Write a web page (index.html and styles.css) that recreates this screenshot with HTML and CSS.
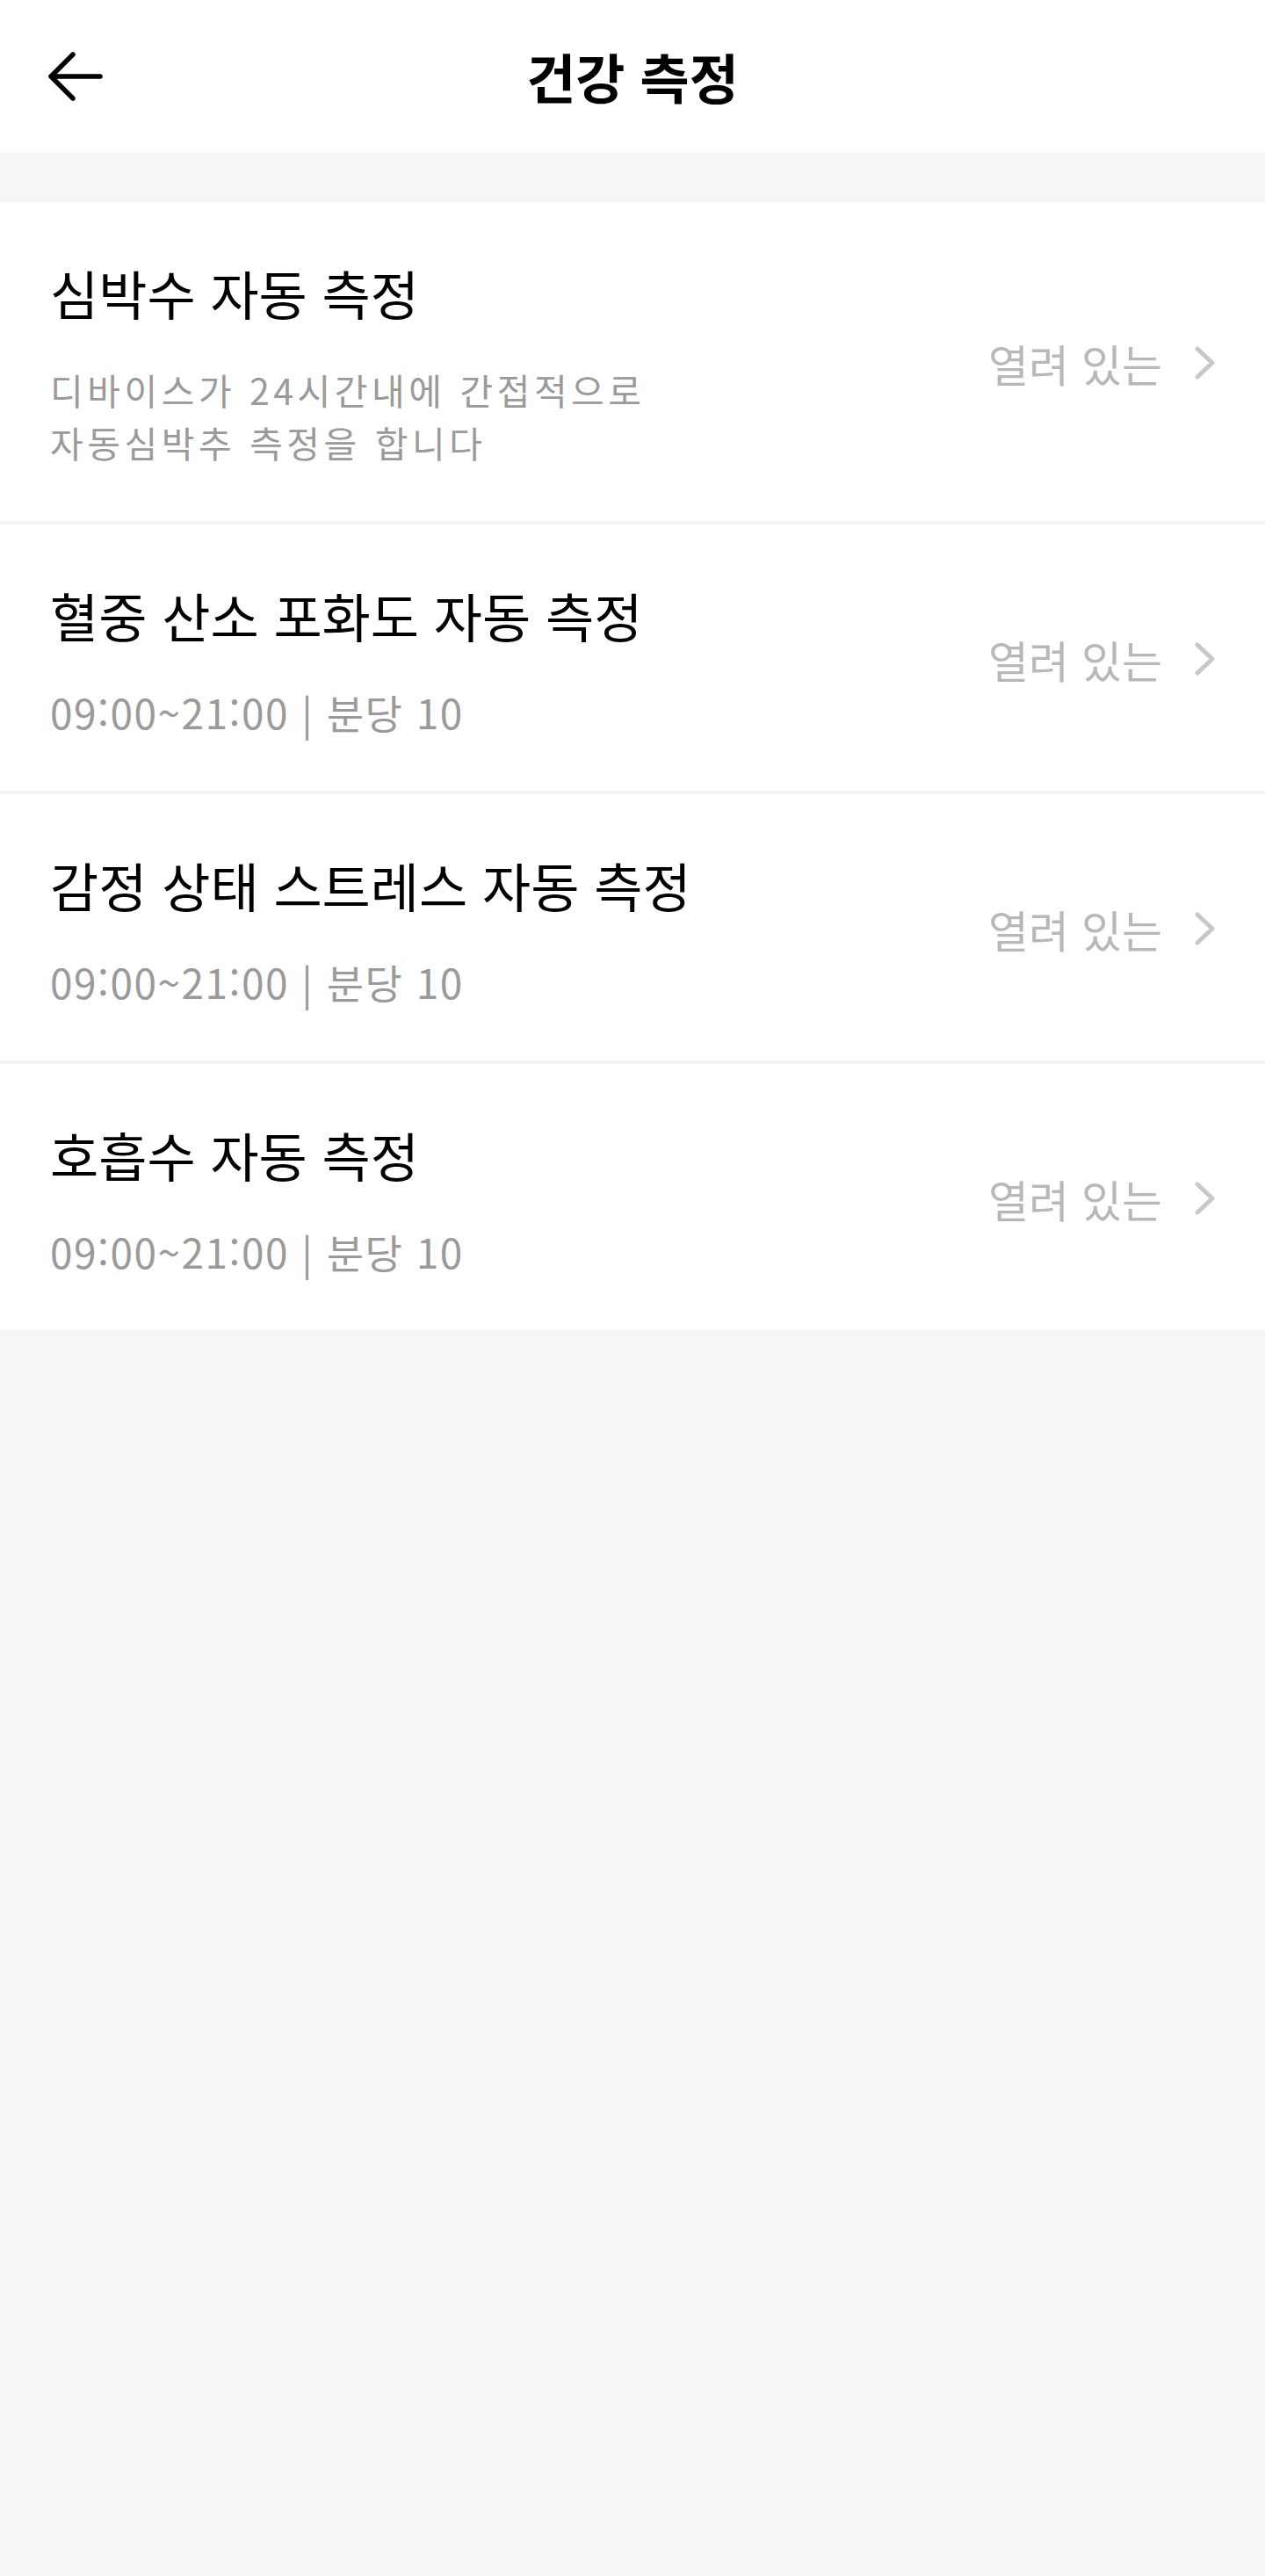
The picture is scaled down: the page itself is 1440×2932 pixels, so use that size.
FILE: index.html
```html
<!DOCTYPE html>
<html lang="ko">
<head>
    <meta charset="UTF-8">
    <meta name="viewport" content="width=device-width, initial-scale=1.0">
    <title>건강 측정</title>
    <link rel="stylesheet" href="styles.css">
</head>
<body>
    <header class="topbar">
        <button class="back-btn" aria-label="뒤로">
            <svg width="64" height="56" viewBox="0 0 64 56">
                <path d="M60 28 H4 M29 3 L4 28 L29 53" fill="none" stroke="#000" stroke-width="5.5" stroke-linecap="round" stroke-linejoin="round"/>
            </svg>
        </button>
        <h1 class="topbar-title">건강 측정</h1>
        <span></span>
    </header>

    <div class="gap"></div>

    <ul class="list">
        <li class="item">
            <div class="item-text">
                <div class="item-title">심박수 자동 측정</div>
                <div class="item-sub item-desc">디바이스가 24시간내에 간접적으로<br>자동심박추 측정을 합니다</div>
            </div>
            <div class="item-state">
                <span>열려 있는</span>
                <svg class="chevron" width="26" height="40" viewBox="0 0 26 40">
                    <path d="M4 4 L21 20 L4 36" fill="none" stroke="#c8c8c8" stroke-width="5" stroke-linecap="round" stroke-linejoin="round"/>
                </svg>
            </div>
        </li>
        <li class="item">
            <div class="item-text">
                <div class="item-title">혈중 산소 포화도 자동 측정</div>
                <div class="item-sub item-time">09:00~21:00 | 분당 10</div>
            </div>
            <div class="item-state">
                <span>열려 있는</span>
                <svg class="chevron" width="26" height="40" viewBox="0 0 26 40">
                    <path d="M4 4 L21 20 L4 36" fill="none" stroke="#c8c8c8" stroke-width="5" stroke-linecap="round" stroke-linejoin="round"/>
                </svg>
            </div>
        </li>
        <li class="item">
            <div class="item-text">
                <div class="item-title">감정 상태 스트레스 자동 측정</div>
                <div class="item-sub item-time">09:00~21:00 | 분당 10</div>
            </div>
            <div class="item-state">
                <span>열려 있는</span>
                <svg class="chevron" width="26" height="40" viewBox="0 0 26 40">
                    <path d="M4 4 L21 20 L4 36" fill="none" stroke="#c8c8c8" stroke-width="5" stroke-linecap="round" stroke-linejoin="round"/>
                </svg>
            </div>
        </li>
        <li class="item">
            <div class="item-text">
                <div class="item-title">호흡수 자동 측정</div>
                <div class="item-sub item-time">09:00~21:00 | 분당 10</div>
            </div>
            <div class="item-state">
                <span>열려 있는</span>
                <svg class="chevron" width="26" height="40" viewBox="0 0 26 40">
                    <path d="M4 4 L21 20 L4 36" fill="none" stroke="#c8c8c8" stroke-width="5" stroke-linecap="round" stroke-linejoin="round"/>
                </svg>
            </div>
        </li>
    </ul>
</body>
</html>
```

FILE: styles.css
```css
body {
    margin: 0;
    padding: 0;
    min-height: 2932px;
    background-color: #f6f6f6;
    font-family: "Noto Sans CJK KR", "Noto Sans", sans-serif;
    color: #000;
}
.topbar {
    height: 174px;
    background-color: #fff;
    display: grid;
    grid-template-columns: 1fr auto 1fr;
    align-items: center;
}
.back-btn {
    justify-self: start;
    margin-left: 54px;
    padding: 0;
    border: none;
    background: none;
    display: flex;
}
.topbar-title {
    margin: 0;
    font-size: 61px;
    font-weight: 700;
    line-height: 80px;
}
.gap {
    height: 56px;
}
.list {
    list-style: none;
    margin: 0;
    padding: 0;
    background-color: #fff;
}
.item {
    display: flex;
    align-items: center;
    justify-content: space-between;
    padding: 63px 55px 60px 57px;
    border-bottom: 4px solid #f4f4f4;
}
.item:last-child { border-bottom: none; }
.item-text {
    display: flex;
    flex-direction: column;
    gap: 40px;
}
.item-title {
    font-size: 60px;
    line-height: 80px;
}
.item-sub {
    font-size: 46px;
    line-height: 60px;
    color: #9a9a9a;
}
.item-desc {
    font-size: 41px;
    letter-spacing: 4.5px;
}
.item-time { letter-spacing: 1.5px; }
.item-state {
    display: flex;
    align-items: center;
    gap: 36px;
    font-size: 50px;
    color: #b8b8b8;
}
```
